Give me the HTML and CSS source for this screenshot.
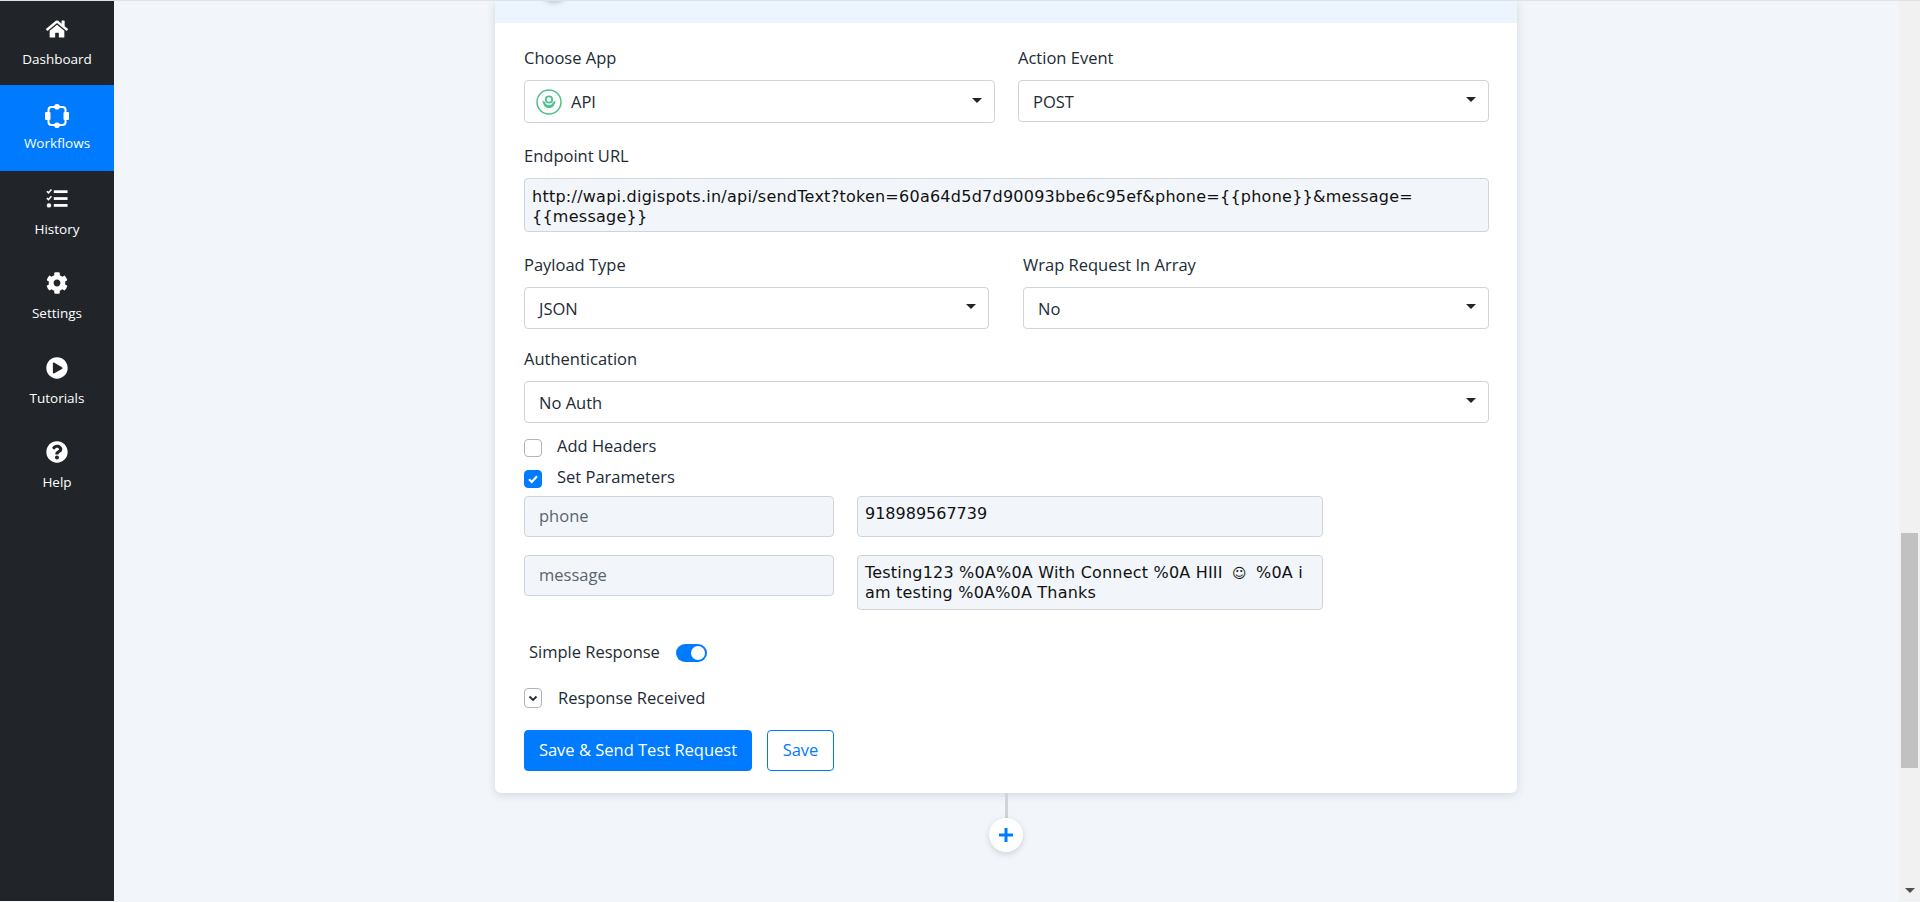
FILE: index.html
```html
<!DOCTYPE html>
<html lang="en">
<head>
    <meta charset="UTF-8">
    <meta name="viewport" content="width=device-width, initial-scale=1.0">
    <title>Workflows</title>
    <link rel="stylesheet" href="styles.css">
</head>
<body>

<div class="shell">
    <nav class="sidebar">
        <a class="nav-item">
            <svg class="nav-icon" viewBox="0 0 576 512" fill="#fff"><path d="M280.37 148.26L96 300.11V464a16 16 0 0 0 16 16l112.06-.29a16 16 0 0 0 15.92-16V368a16 16 0 0 1 16-16h64a16 16 0 0 1 16 16v95.64a16 16 0 0 0 16 16.05L464 480a16 16 0 0 0 16-16V300L295.67 148.26a12.19 12.19 0 0 0-15.3 0zM571.6 251.47L488 182.56V44.05a12 12 0 0 0-12-12h-56a12 12 0 0 0-12 12v72.61L318.47 43a48 48 0 0 0-61 0L4.34 251.47a12 12 0 0 0-1.6 16.9l25.5 31A12 12 0 0 0 45.15 301l235.22-193.74a12.19 12.19 0 0 1 15.3 0L530.9 301a12 12 0 0 0 16.9-1.6l25.5-31a12 12 0 0 0-1.7-16.93z"/></svg>
            <span>Dashboard</span>
        </a>
        <a class="nav-item active">
            <svg class="nav-icon" viewBox="0 0 24 24" fill="#fff"><rect x="3.500" y="3" width="17" height="18" rx="3" fill="none" stroke="#fff" stroke-width="2"/><circle cx="12" cy="2.800" r="2.800"/><circle cx="12" cy="21.200" r="2.800"/><rect x="0" y="8" width="5.500" height="8" rx="1"/><rect x="18.500" y="8" width="5.500" height="8" rx="1"/></svg>
            <span>Workflows</span>
        </a>
        <a class="nav-item history">
            <svg class="nav-icon" viewBox="0 0 24 24" fill="#fff"><rect x="8.500" y="2.500" width="15" height="3"/><rect x="8.500" y="10" width="15" height="3"/><rect x="8.500" y="17.500" width="15" height="3"/><path d="M1 3.500l1.700 1.700L6 1.600M1 11l1.700 1.700L6 9.100" fill="none" stroke="#fff" stroke-width="1.700"/><circle cx="3.200" cy="19" r="2.400"/></svg>
            <span>History</span>
        </a>
        <a class="nav-item">
            <svg class="nav-icon" viewBox="0 0 512 512" fill="#fff"><path d="M487.4 315.7l-42.6-24.6c4.3-23.2 4.3-47 0-70.2l42.6-24.6c4.9-2.8 7.1-8.6 5.5-14-11.1-35.6-30-67.8-54.7-94.6-3.8-4.1-10-5.1-14.8-2.3L380.8 110c-17.9-15.4-38.5-27.3-60.8-35.1V25.8c0-5.6-3.9-10.5-9.4-11.7-36.7-8.2-74.3-7.8-109.2 0-5.5 1.2-9.4 6.1-9.4 11.7V75c-22.2 7.9-42.8 19.8-60.8 35.1L88.7 85.5c-4.9-2.8-11-1.9-14.8 2.3-24.7 26.7-43.6 58.9-54.7 94.6-1.7 5.4.6 11.2 5.5 14L67.3 221c-4.3 23.2-4.3 47 0 70.2l-42.6 24.6c-4.9 2.8-7.1 8.6-5.5 14 11.1 35.6 30 67.8 54.7 94.6 3.8 4.1 10 5.1 14.8 2.3l42.6-24.6c17.9 15.4 38.5 27.3 60.8 35.1v49.2c0 5.6 3.9 10.5 9.4 11.7 36.7 8.2 74.3 7.8 109.2 0 5.5-1.2 9.4-6.1 9.4-11.7v-49.2c22.2-7.9 42.8-19.8 60.8-35.1l42.6 24.6c4.9 2.8 11 1.9 14.8-2.3 24.7-26.7 43.6-58.9 54.7-94.6 1.5-5.5-.7-11.3-5.6-14.1zM256 336c-44.1 0-80-35.9-80-80s35.9-80 80-80 80 35.9 80 80-35.9 80-80 80z"/></svg>
            <span>Settings</span>
        </a>
        <a class="nav-item">
            <svg class="nav-icon" viewBox="0 0 512 512" fill="#fff"><path d="M256 8C119 8 8 119 8 256s111 248 248 248 248-111 248-248S393 8 256 8zm115.7 272l-176 101c-15.8 8.8-35.7-2.5-35.7-20.9V152c0-18.3 19.8-29.7 35.7-20.9l176 107c16.4 9.2 16.4 32.9 0 41.9z"/></svg>
            <span>Tutorials</span>
        </a>
        <a class="nav-item">
            <svg class="nav-icon" viewBox="0 0 512 512" fill="#fff"><path d="M504 256c0 136.997-111.043 248-248 248S8 392.997 8 256C8 119.083 119.043 8 256 8s248 111.083 248 248zM262.655 90c-54.497 0-89.255 22.957-116.549 63.758-3.536 5.286-2.353 12.415 2.715 16.258l34.699 26.31c5.205 3.947 12.621 3.008 16.665-2.122 17.864-22.658 30.113-35.797 57.303-35.797 20.429 0 45.698 13.148 45.698 32.958 0 14.976-12.363 22.667-32.534 33.976C247.128 238.528 216 254.941 216 296v4c0 6.627 5.373 12 12 12h56c6.627 0 12-5.373 12-12v-1.333c0-28.462 83.186-29.647 83.186-106.667 0-58.002-60.165-102-116.531-102zM256 338c-25.365 0-46 20.635-46 46 0 25.364 20.635 46 46 46s46-20.636 46-46c0-25.365-20.635-46-46-46z"/></svg>
            <span>Help</span>
        </a>
    </nav>

    <main class="content">
        <section class="card">
            <div class="card-header"><span class="node-shadow"></span></div>
            <div class="card-body">
                <div class="two-col">
                    <div>
                        <div class="field-label">Choose App</div>
                        <div class="select tall">
                            <span class="select-value">
                                <svg class="app-icon" viewBox="0 0 26 26"><circle cx="13" cy="13" r="12" fill="#fff" stroke="#4fc08d" stroke-width="1.500"/><circle cx="13" cy="10.500" r="3.200" fill="none" stroke="#4fc08d" stroke-width="1.800"/><path d="M6.500 11.500c.5 5 3 7.500 6.500 7.500s6-2.500 6.500-7.500l-2.500 1.500c-.5 2-2 3.300-4 3.300s-3.500-1.300-4-3.300z" fill="#4fc08d"/></svg>
                                API
                            </span>
                            <span class="caret"></span>
                        </div>
                    </div>
                    <div>
                        <div class="field-label">Action Event</div>
                        <div class="select"><span class="select-value">POST</span><span class="caret"></span></div>
                    </div>
                </div>

                <div class="field-label gap-21">Endpoint URL</div>
                <div class="text-box url">http://wapi.digispots.in/api/sendText?token=60a64d5d7d90093bbe6c95ef&amp;phone={{phone}}&amp;message=<br>{{message}}</div>

                <div class="two-col wide-gap gap-21">
                    <div>
                        <div class="field-label">Payload Type</div>
                        <div class="select"><span class="select-value">JSON</span><span class="caret"></span></div>
                    </div>
                    <div>
                        <div class="field-label">Wrap Request In Array</div>
                        <div class="select"><span class="select-value">No</span><span class="caret"></span></div>
                    </div>
                </div>

                <div class="field-label gap-18">Authentication</div>
                <div class="select"><span class="select-value">No Auth</span><span class="caret"></span></div>

                <div class="check-row gap-13"><span class="check"></span><span class="check-text">Add Headers</span></div>
                <div class="check-row gap-7">
                    <span class="check on"><svg viewBox="0 0 12 12" width="12" height="12"><path d="M2 6.300l2.800 2.700L10 3.300" fill="none" stroke="#fff" stroke-width="2.200"/></svg></span>
                    <span class="check-text">Set Parameters</span>
                </div>

                <div class="param-grid">
                    <div class="text-box key">phone</div>
                    <div class="text-box value">918989567739</div>
                    <div class="text-box key">message</div>
                    <div class="text-box value spaced">Testing123 %0A%0A With Connect %0A HIII <span class="smile">☺</span> %0A i am testing %0A%0A Thanks</div>
                </div>

                <div class="toggle-row"><span class="check-text">Simple Response</span><span class="toggle"></span></div>

                <div class="check-row response-row">
                    <span class="check chevron"><svg viewBox="0 0 12 12" width="12" height="12"><path d="M2.500 4.500L6 8l3.500-3.500" fill="none" stroke="#212b36" stroke-width="1.800"/></svg></span>
                    <span class="check-text">Response Received</span>
                </div>

                <div class="actions">
                    <button class="btn primary">Save &amp; Send Test Request</button>
                    <button class="btn outline">Save</button>
                </div>
            </div>
        </section>

        <div class="connector"></div>
        <div class="add-step">
            <svg viewBox="0 0 16 16" width="16" height="16"><path d="M8 1v14M1 8h14" stroke="#007bff" stroke-width="3"/></svg>
        </div>
    </main>

    <div class="scrollbar">
        <div class="scroll-thumb"></div>
        <div class="scroll-arrow"></div>
    </div>
</div>

</body>
</html>
```

FILE: styles.css
```css
html, body {
    margin: 0;
    height: 100%;
    overflow: hidden;
}
body {
    font-family: "Open Sans", sans-serif;
    font-size: 16.5px;
    color: #212b36;
    background-color: #f2f6fa;
}
.shell {
    display: flex;
    height: 901px;
    border-top: 1px solid #dee2e6;
    box-sizing: border-box;
}

/* sidebar */
.sidebar {
    width: 114px;
    flex-shrink: 0;
    background-color: #212529;
}
.nav-item {
    display: flex;
    flex-direction: column;
    align-items: center;
    height: 84.6px;
    padding-top: 17px;
    box-sizing: border-box;
    color: #fff;
    font-size: 13.5px;
    font-weight: 500;
    line-height: 20px;
}
.nav-item:first-child {
    height: 84px;
}
.nav-item.active {
    height: 86px;
    padding-top: 19px;
    background-color: #007bff;
}
.nav-item.history {
    height: 84px;
}
.nav-icon {
    width: 22px;
    height: 22px;
    margin-bottom: 9px;
}
.active .nav-icon {
    width: 24px;
    height: 24px;
    margin-bottom: 5px;
}

/* main area */
.content {
    flex: 1;
    padding-left: 381px;
    overflow: hidden;
}
.card {
    width: 1022px;
    background-color: #fff;
    border-radius: 0 0 6px 6px;
    box-shadow: 0 2px 8px rgba(40, 60, 90, 0.16);
}
.card-header {
    position: relative;
    height: 22px;
    background-color: #ecf5fe;
    overflow: hidden;
}
.node-shadow {
    position: absolute;
    left: 45px;
    top: -28px;
    width: 28px;
    height: 28px;
    border-radius: 50%;
    box-shadow: 0 2px 5px rgba(0, 0, 0, 0.2);
}
.card-body {
    padding: 23px 28px 22px 29px;
}

.two-col {
    display: grid;
    grid-template-columns: 471px 471px;
    column-gap: 23px;
}
.two-col.wide-gap {
    grid-template-columns: 465px 466px;
    column-gap: 34px;
}
.field-label {
    line-height: 24px;
    margin-bottom: 10px;
}
.gap-21 { margin-top: 21px; }
.gap-18 { margin-top: 18px; }
.gap-13 { margin-top: 13px; }
.gap-7 { margin-top: 7px; }

.select {
    display: flex;
    align-items: center;
    justify-content: space-between;
    height: 42px;
    padding: 0 12px 0 14px;
    box-sizing: border-box;
    background-color: #fff;
    border: 1px solid #ced4da;
    border-radius: 4px;
}
.select.tall {
    height: 43px;
}
.select-value {
    display: flex;
    align-items: center;
    gap: 9px;
}
.caret {
    width: 0;
    height: 0;
    border-left: 5.500px solid transparent;
    border-right: 5.500px solid transparent;
    border-top: 5.500px solid #212529;
    margin-top: -3px;
}
.app-icon {
    width: 26px;
    height: 26px;
    margin-left: -3px;
}

.text-box {
    padding: 7px 7px 5px;
    box-sizing: border-box;
    background-color: #f2f6fa;
    border: 1px solid #ced4da;
    border-radius: 4px;
    font-family: "DejaVu Sans", sans-serif;
    font-size: 16px;
    line-height: 20px;
    color: #111;
}
.url {
    height: 54px;
    padding-top: 8px;
    white-space: nowrap;
    letter-spacing: 0.25px;
}
.param-grid {
    display: grid;
    grid-template-columns: 310px 466px;
    column-gap: 23px;
    row-gap: 18px;
    align-items: start;
    margin-top: 5px;
}
.text-box.key {
    height: 41px;
    padding: 9px 14px;
    font-family: "Open Sans", sans-serif;
    font-size: 16.5px;
    color: #5a6470;
}
.text-box.value {
    min-height: 41px;
}
.text-box.spaced {
    height: 55px;
    letter-spacing: 0.2px;
}
.smile {
    margin: 0 4px;
    font-size: 14px;
}

.check-row {
    display: flex;
    align-items: center;
    height: 24px;
}
.check-text {
    margin-top: -5px;
}
.check {
    display: flex;
    align-items: center;
    justify-content: center;
    width: 18px;
    height: 18px;
    margin-right: 15px;
    box-sizing: border-box;
    border: 1px solid #adb5bd;
    border-radius: 4px;
    background-color: #fff;
}
.check.on {
    background-color: #007bff;
    border-color: #007bff;
}
.check.chevron {
    height: 20px;
    margin-right: 16px;
}

.toggle-row {
    display: flex;
    align-items: center;
    height: 24px;
    margin-top: 31px;
    padding-left: 5px;
}
.toggle-row .check-text {
    margin-top: -3px;
}
.toggle {
    position: relative;
    width: 31px;
    height: 18px;
    margin-left: 16px;
    background-color: #007bff;
    border-radius: 9px;
}
.toggle::after {
    content: "";
    position: absolute;
    right: 2px;
    top: 2px;
    width: 14px;
    height: 14px;
    border-radius: 50%;
    background-color: #fff;
}
.response-row {
    margin-top: 21px;
}
.response-row .check-text {
    margin-top: -2px;
}

.actions {
    display: flex;
    gap: 15px;
    margin-top: 20px;
}
.btn {
    height: 41px;
    padding: 0 0 2px;
    font-family: "Open Sans", sans-serif;
    font-size: 16.5px;
    border-radius: 4px;
    border: 1px solid #007bff;
}
.btn.primary {
    width: 228px;
    background-color: #007bff;
    color: #fff;
}
.btn.outline {
    width: 67px;
    background-color: #fff;
    color: #007bff;
}

/* add step */
.connector {
    width: 3px;
    height: 25px;
    margin-left: 510px;
    background-color: #ced4da;
}
.add-step {
    display: flex;
    align-items: center;
    justify-content: center;
    width: 34px;
    height: 34px;
    margin-left: 494px;
    border-radius: 50%;
    background-color: #fff;
    box-shadow: 0 2px 6px rgba(0, 0, 0, 0.15);
}

/* fake window scrollbar */
.scrollbar {
    display: flex;
    flex-direction: column;
    align-items: center;
    width: 21px;
    flex-shrink: 0;
    background-color: #f1f1f1;
}
.scroll-thumb {
    width: 17px;
    height: 235px;
    margin-top: 532px;
    background-color: #c1c1c1;
}
.scroll-arrow {
    width: 0;
    height: 0;
    margin-top: 120px;
    border-left: 5px solid transparent;
    border-right: 5px solid transparent;
    border-top: 5px solid #505050;
}
```
